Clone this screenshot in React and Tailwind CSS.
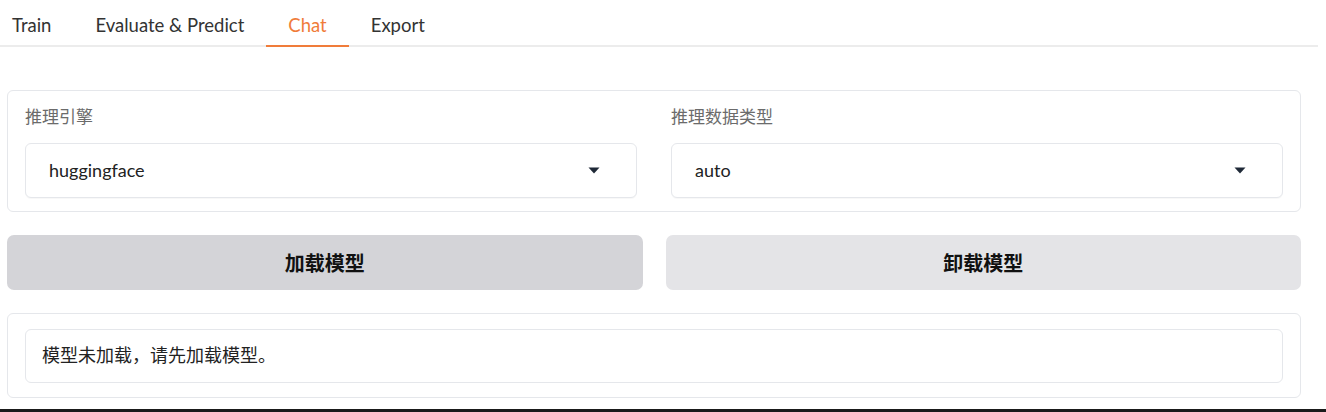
import { useState } from "react";

const tabs = ["Train", "Evaluate & Predict", "Chat", "Export"];

function Caret() {
  return (
    <svg width="12" height="7" viewBox="0 0 12 7" className="shrink-0">
      <path d="M0.5 0.5 L11.5 0.5 L6 6.5 Z" fill="#1f2937" />
    </svg>
  );
}

function Dropdown({ label, value }) {
  return (
    <div className="flex flex-col flex-1">
      <label className="text-[17px] leading-[20px] text-[#6b6b6b] h-[20px] mb-[16px] mt-[16px]">{label}</label>
      <div className="h-[55px] rounded-[6px] border border-[#e5e7eb] bg-white flex items-center justify-between pl-[23px] pr-[36px] shadow-[0_1px_1px_rgba(0,0,0,0.03)]">
        <span className="text-[18px] text-[#222222]">{value}</span>
        <Caret />
      </div>
    </div>
  );
}

export default function App() {
  const [active, setActive] = useState("Chat");

  return (
    <div
      className="w-[1326px] h-[412px] bg-white overflow-hidden flex flex-col"
      style={{ fontFamily: '"Lato", "Noto Sans CJK SC", sans-serif' }}
    >
      {/* TABS */}
      <div className="w-[1318px] h-[47px] border-b-2 border-[#ececec] flex items-end">
        {tabs.map((t) => (
          <button
            key={t}
            onClick={() => setActive(t)}
            className={`h-[47px] pt-[6px] px-[22px] first:pl-[12px] text-[18.5px] -mb-[2px] border-b-2 ${
              t === active
                ? "text-[#f07c3a] border-[#f07c3a]"
                : "text-[#333333] border-transparent"
            }`}
          >
            {t}
          </button>
        ))}
      </div>

      <div className="pl-[7px] w-[1301px] flex flex-col gap-[23px] mt-[43px]">
        {/* ENGINE + DTYPE */}
        <div className="h-[122px] rounded-[6px] border border-[#e5e7eb] px-[17px] flex gap-[34px]">
          <Dropdown label="推理引擎" value="huggingface" />
          <Dropdown label="推理数据类型" value="auto" />
        </div>

        {/* BUTTONS */}
        <div className="flex gap-[23px]">
          <button className="flex-1 h-[55px] rounded-[7px] bg-[#d4d4d8] text-[20px] font-bold text-[#111111]">
            加载模型
          </button>
          <button className="flex-1 h-[55px] rounded-[7px] bg-[#e4e4e7] text-[20px] font-bold text-[#111111]">
            卸载模型
          </button>
        </div>

        {/* STATUS */}
        <div className="h-[85px] rounded-[6px] border border-[#e5e7eb] px-[17px] flex items-center">
          <div className="w-full h-[54px] rounded-[6px] border border-[#e5e7eb] flex items-center pl-[16px] text-[18px] text-[#222222]">
            模型未加载，请先加载模型。
          </div>
        </div>
      </div>

      <div className="mt-auto h-[3px] bg-[#1a1a1a] w-full" />
    </div>
  );
}
